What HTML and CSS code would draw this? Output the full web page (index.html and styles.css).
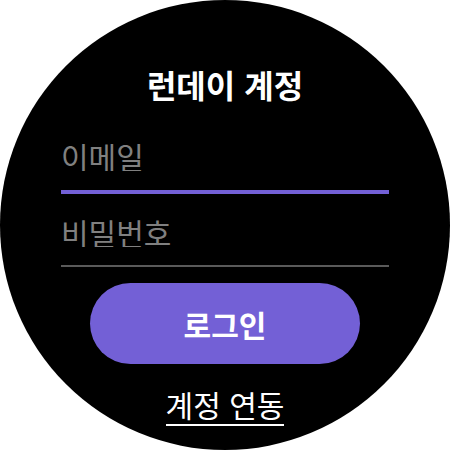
FILE: index.html
```html
<!DOCTYPE html>
<html lang="ko">
<head>
    <meta charset="UTF-8">
    <meta name="viewport" content="width=device-width, initial-scale=1.0">
    <title>런데이 계정</title>
    <link rel="stylesheet" href="styles.css">
</head>
<body>
    <div class="watch">
        <h1 class="title">런데이 계정</h1>

        <div class="field active">
            <input type="email" placeholder="이메일">
        </div>
        <div class="field">
            <input type="password" placeholder="비밀번호">
        </div>

        <button class="login">로그인</button>

        <a class="link" href="#">계정 연동</a>
    </div>
</body>
</html>
```

FILE: styles.css
```css
body {
    margin: 0;
    background-color: #fff;
    font-family: "Noto Sans CJK KR", "Noto Sans", sans-serif;
}

.watch {
    width: 450px;
    height: 450px;
    box-sizing: border-box;
    padding-top: 68px;
    border-radius: 50%;
    background-color: #000;
    display: flex;
    flex-direction: column;
    align-items: center;
}

.title {
    margin: 0 0 41px;
    font-size: 32px;
    line-height: 32px;
    font-weight: bold;
    color: #fff;
}

.field {
    width: 328px;
    padding-bottom: 18px;
    border-bottom: 2px solid #5a5a5a;
}

.field.active {
    padding-bottom: 19px;
    border-bottom: 4px solid #7360d6;
    margin-bottom: 23px;
}

.field input {
    display: block;
    width: 100%;
    box-sizing: border-box;
    margin: 0;
    padding: 0;
    border: none;
    outline: none;
    background: transparent;
    font-family: inherit;
    font-size: 30px;
    line-height: 30px;
    height: 30px;
    color: #fff;
}

.field input::placeholder {
    color: #808080;
}

.login {
    margin-top: 16px;
    width: 270px;
    height: 81px;
    border: none;
    border-radius: 41px;
    background-color: #7360d6;
    color: #fff;
    font-family: inherit;
    font-size: 30px;
    font-weight: bold;
    cursor: pointer;
}

.link {
    margin-top: 25px;
    padding-bottom: 5px;
    border-bottom: 2px solid #fff;
    font-size: 30px;
    line-height: 30px;
    color: #fff;
    text-decoration: none;
}
```
